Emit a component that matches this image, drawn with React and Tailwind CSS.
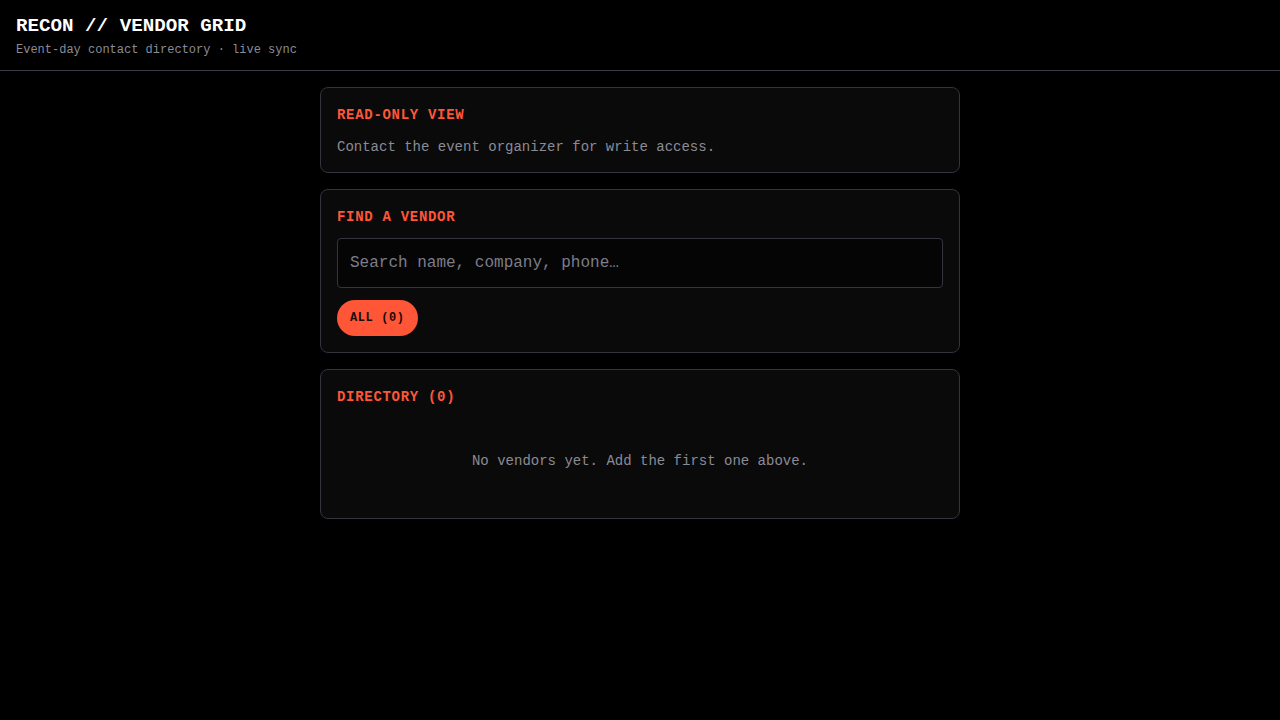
function Card({ title, className = "pb-[15px]", children }) {
  return (
    <section className={"rounded-lg border border-[#34343f] bg-[#0a0a0b] px-4 pt-[17px] " + className}>
      <h2 className="text-sm leading-5 font-bold tracking-wider text-[#ff5638]">{title}</h2>
      {children}
    </section>
  );
}

export default function App() {
  return (
    <div className="min-h-screen bg-black text-white font-['Liberation_Mono',monospace]">
      <header className="border-b border-[#3a3a48] px-4 pt-[15px] pb-[12px]">
        <h1 className="text-[19.2px] leading-[23px] font-bold text-white">RECON // VENDOR GRID</h1>
        <p className="mt-1 text-xs leading-4 text-[#8b8b96]">Event-day contact directory · live sync</p>
      </header>

      <main className="mx-auto flex max-w-[640px] flex-col gap-4 pt-4">
        <Card title="READ-ONLY VIEW">
          <p className="mt-3 text-sm leading-5 text-[#8b8b96]">Contact the event organizer for write access.</p>
        </Card>

        <Card title="FIND A VENDOR" className="pb-4">
          <input
            type="text"
            placeholder="Search name, company, phone…"
            className="mt-[11px] block h-[50px] w-full rounded-[4px] border border-[#34343f] bg-[#050506] px-3 text-base text-white placeholder:text-[#7d7d88] outline-none"
          />
          <div className="mt-3 flex gap-2">
            <button className="h-9 rounded-full bg-[#ff5638] px-[13px] text-xs font-bold tracking-wider text-[#1a0a08]">
              ALL (0)
            </button>
          </div>
        </Card>

        <Card title="DIRECTORY (0)">
          <p className="mt-3 py-8 text-center text-sm leading-5 text-[#8b8b96]">No vendors yet. Add the first one above.</p>
        </Card>
      </main>
    </div>
  );
}
